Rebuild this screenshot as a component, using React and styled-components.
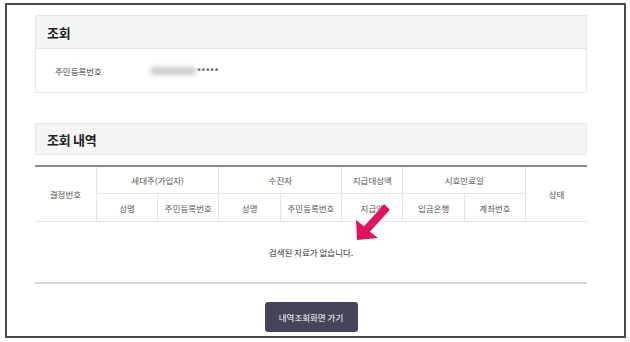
import styled, { createGlobalStyle } from "styled-components";

const GlobalStyle = createGlobalStyle`
  html, body {
    margin: 0;
    padding: 0;
    background: #ffffff;
    font-family: "Noto Sans CJK KR", "Noto Sans", sans-serif;
    color: #333;
  }
`;

const Frame = styled.div`
  position: relative;
  box-sizing: border-box;
  width: 621px;
  height: 335px;
  margin: 3px 0 0 5px;
  border: 2px solid #4a4a4a;
  padding: 10px 0 0 28px;
`;

const Panel = styled.section`
  width: 552px;
  box-sizing: border-box;
  border: 1px solid #e8e8e8;
  margin-bottom: ${(p) => p.$gap || 0}px;
`;

const PanelHead = styled.div`
  box-sizing: border-box;
  height: ${(p) => p.$h}px;
  background: #f5f5f5;
  border-bottom: ${(p) => (p.$line ? "1px solid #e4e4e4" : "none")};
  display: flex;
  align-items: center;
  padding-left: 11px;
  font-size: 13px;
  font-weight: 700;
  color: #222;
  letter-spacing: -0.3px;
`;

const InfoRow = styled.div`
  height: 43px;
  display: flex;
  align-items: center;
  padding-left: 19px;
  font-size: 8.5px;
  color: #444;
`;

const Label = styled.span`
  width: 95px;
`;

const Blurred = styled.span`
  display: inline-block;
  width: 46px;
  height: 8px;
  border-radius: 4px;
  background: #cbcbcb;
  filter: blur(2.5px);
  margin-right: 1px;
`;

const Masked = styled.span`
  font-size: 8px;
  font-weight: 700;
  color: #555;
  letter-spacing: 0.3px;
`;

const Table = styled.table`
  width: 552px;
  margin-top: 10px;
  border-collapse: collapse;
  table-layout: fixed;
  font-size: 8.5px;
  color: #555;
  border-top: 2px solid #8a8a8a;
`;

const Th = styled.th`
  font-weight: 400;
  height: ${(p) => p.$h || 26}px;
  padding: 0;
  text-align: center;
  border: 1px solid #e6e6e6;
  border-top: none;
  &:first-child {
    border-left: none;
  }
  &:last-child {
    border-right: none;
  }
`;

const EmptyCell = styled.td`
  height: 60px;
  padding: 0;
  text-align: center;
  font-size: 8.5px;
  color: #333;
  border-bottom: 2px solid #d3d8dd;
`;

const ButtonRow = styled.div`
  width: 552px;
  display: flex;
  justify-content: center;
  padding-top: 18px;
`;

const Button = styled.button`
  width: 93px;
  height: 30px;
  border: none;
  border-radius: 3px;
  background: #45455a;
  color: #ffffff;
  font-family: inherit;
  font-size: 8.5px;
  padding: 0;
`;

const Arrow = styled.svg`
  position: absolute;
  left: 343px;
  top: 195px;
`;

const App = () => {
  return (
    <>
      <GlobalStyle />
      <Frame>
        <Panel $gap={30}>
          <PanelHead $h={33} $line>조회</PanelHead>
          <InfoRow>
            <Label>주민등록번호</Label>
            <Blurred />
            <Masked>*****</Masked>
          </InfoRow>
        </Panel>
        <Panel>
          <PanelHead $h={30}>조회 내역</PanelHead>
        </Panel>
        <Table>
          <thead>
            <tr>
              <Th rowSpan={2}>결정번호</Th>
              <Th colSpan={2} $h={26}>세대주(가입자)</Th>
              <Th colSpan={2}>수진자</Th>
              <Th>지급대상액</Th>
              <Th colSpan={2}>시효만료일</Th>
              <Th rowSpan={2}>상태</Th>
            </tr>
            <tr>
              <Th $h={27}>성명</Th>
              <Th>주민등록번호</Th>
              <Th>성명</Th>
              <Th>주민등록번호</Th>
              <Th>지급액</Th>
              <Th>입금은행</Th>
              <Th>계좌번호</Th>
            </tr>
          </thead>
          <tbody>
            <tr>
              <EmptyCell colSpan={9}>검색된 자료가 없습니다.</EmptyCell>
            </tr>
          </tbody>
        </Table>
        <ButtonRow>
          <Button>내역조회화면 가기</Button>
        </ButtonRow>
        <Arrow width="50" height="45" viewBox="0 0 50 45">
          <polygon
            points="7,40 6,20 14.1,26.3 34.1,4.3 39.9,9.7 19.9,31.7 28,38"
            fill="#e0135f"
          />
        </Arrow>
      </Frame>
    </>
  );
};

export default App;
